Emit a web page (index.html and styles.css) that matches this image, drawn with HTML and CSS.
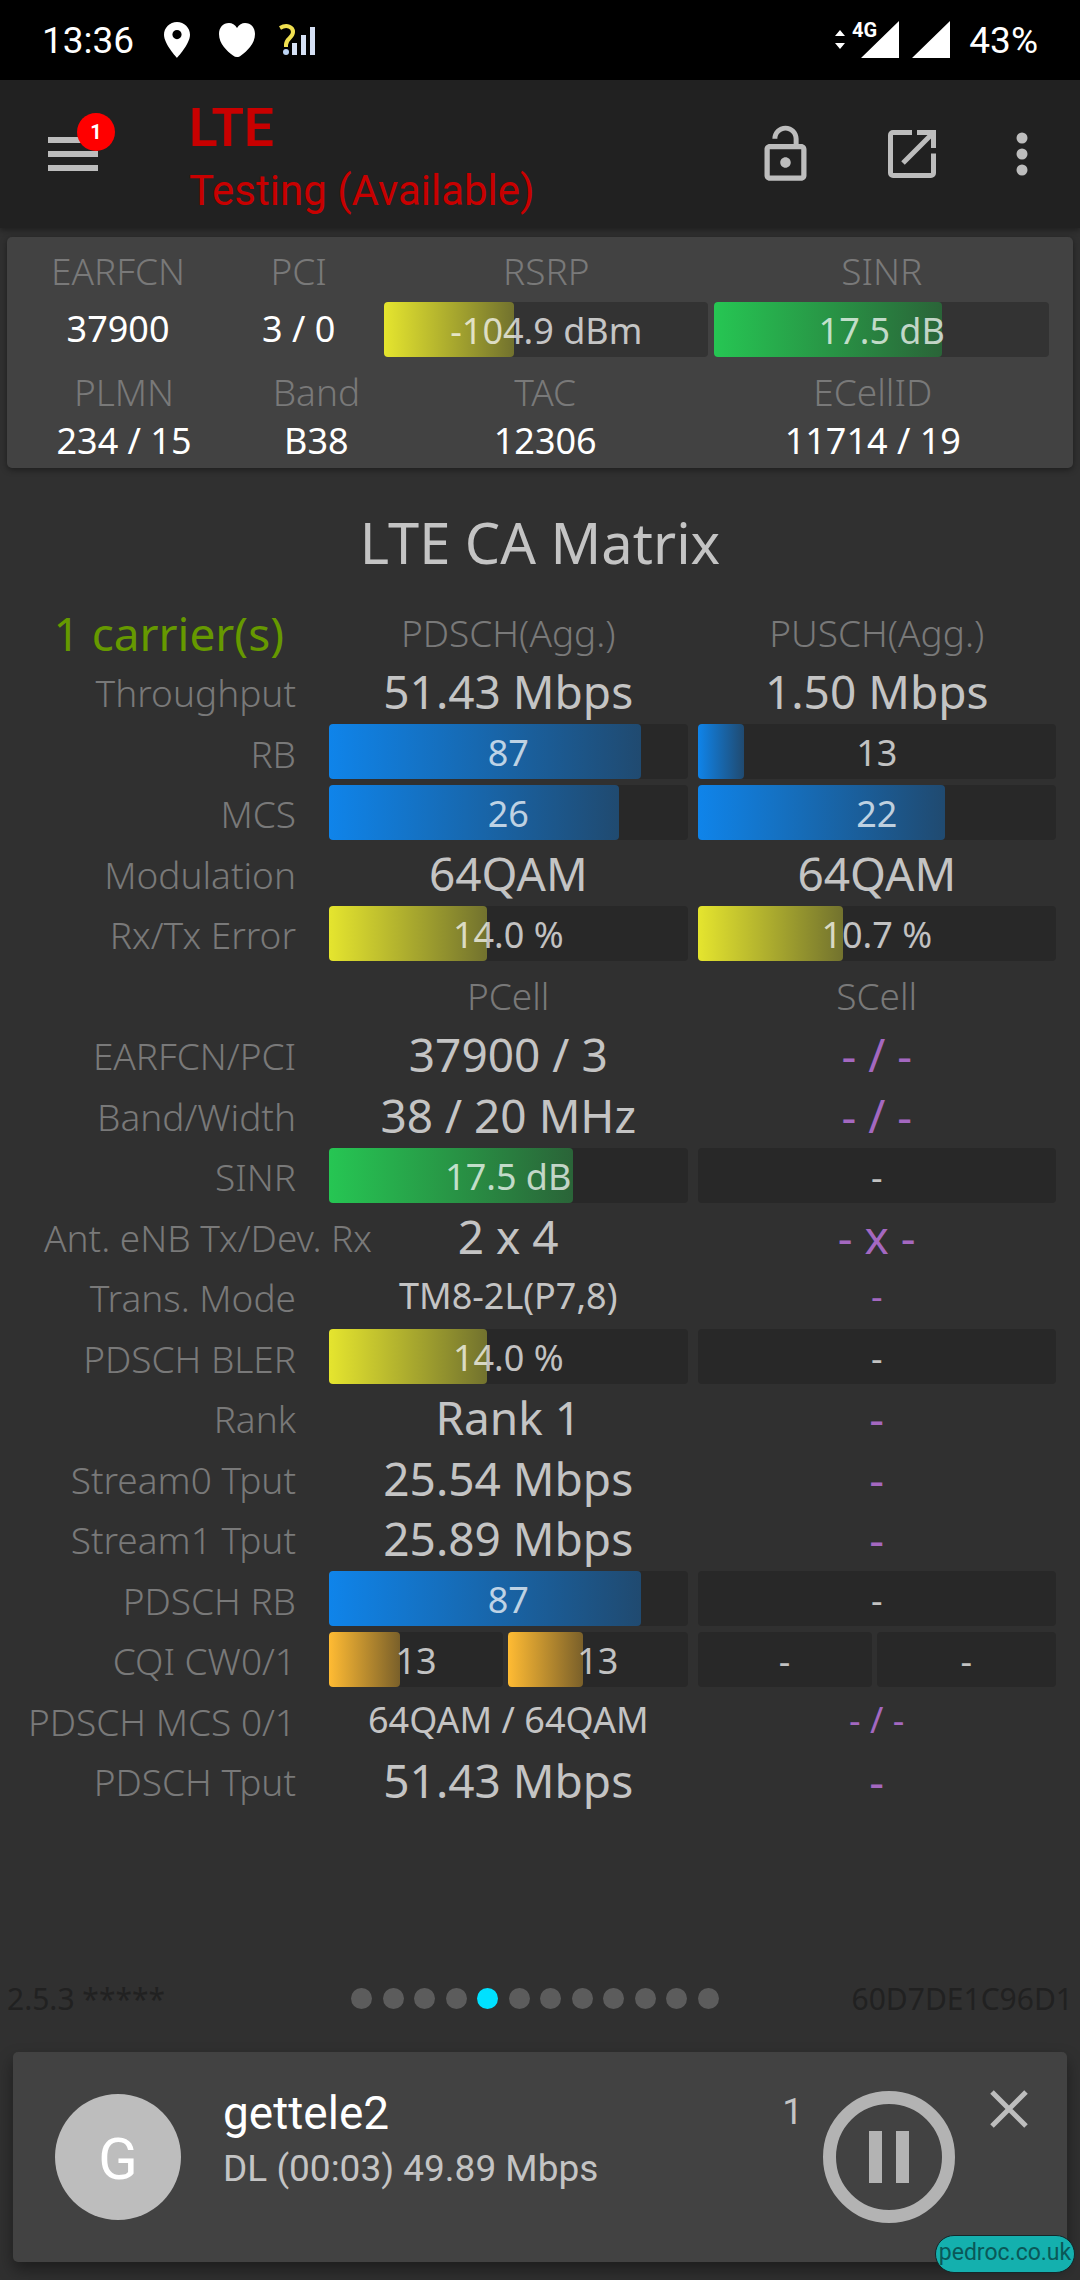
FILE: index.html
```html
<!DOCTYPE html>
<html lang="en">
<head>
    <meta charset="UTF-8">
    <meta name="viewport" content="width=device-width, initial-scale=1.0">
    <title>LTE CA Matrix</title>
    <link rel="stylesheet" href="styles.css">
</head>
<body>
    <div class="status-bar">
        <span class="clock">13:36</span>
        <svg class="pin" width="26" height="36" viewBox="0 0 26 36"><path fill="#fff" fill-rule="evenodd" d="M13 0C5.800 0 0 5.700 0 12.800 0 22 13 36 13 36s13-14 13-23.200C26 5.700 20.200 0 13 0zm0 8a4.600 4.600 0 1 1 0 9.200A4.600 4.600 0 0 1 13 8z"/></svg>
        <svg class="heart" width="36" height="34" viewBox="0 0 36 34"><path fill="#fff" d="M18 5C16 1.500 13 0 10 0 4 0 0 4.500 0 11c0 10 8 17 14 21.500 2.500 2 5.500 2 8 0C28 28 36 21 36 11 36 4.500 32 0 26 0c-3 0-6 1.500-8 5z"/></svg>
        <svg class="signal" width="36" height="32" viewBox="0 0 36 32">
            <path fill="none" stroke="#f0e050" stroke-width="4" d="M1 4c7-4 13-1 13 4 0 6-7 6-7 13v2"/>
            <circle cx="7" cy="28" r="3" fill="#bcd4f4"/>
            <path fill="#d5e0f4" d="M13 19h5v12h-5zM22 11h5v20h-5zM31 3h5v28h-5z"/>
        </svg>
        <span class="spacer"></span>
        <svg width="116" height="50" viewBox="0 -6 116 50">
            <path fill="#fff" d="M1 15l5-6 5 6zM1 22h10l-5 6zM65 0v37H27zM116 0v37H78z"/>
            <text class="network" x="18" y="16">4G</text>
        </svg>
        <span class="battery">43%</span>
    </div>

    <header class="toolbar">
        <button class="menu-button" aria-label="Menu">
            <svg width="50" height="35" viewBox="0 0 50 35"><path fill="#bdbdbd" d="M0 0h50v6H0zM0 14h50v6H0zM0 28h50v6H0z"/></svg>
            <span class="badge">1</span>
        </button>
        <div class="heading">
            <h1>LTE</h1>
            <p>Testing (Available)</p>
        </div>
        <button aria-label="Unlock">
            <svg width="63" height="63" viewBox="0 0 24 24"><path fill="#bdbdbd" d="M12 17c1.100 0 2-.9 2-2s-.9-2-2-2-2 .9-2 2 .9 2 2 2zm6-9h-1V6c0-2.760-2.240-5-5-5S7 3.240 7 6h1.900c0-1.710 1.390-3.100 3.100-3.100s3.100 1.390 3.100 3.100v2H6c-1.100 0-2 .9-2 2v10c0 1.100.9 2 2 2h12c1.100 0 2-.9 2-2V10c0-1.100-.9-2-2-2zm0 12H6V10h12v10z"/></svg>
        </button>
        <button class="open-button" aria-label="Open">
            <svg width="48" height="48" viewBox="0 0 48 48">
                <path fill="none" stroke="#bdbdbd" stroke-width="5" d="M24 2.500H5a2.500 2.500 0 0 0-2.500 2.500v38A2.500 2.500 0 0 0 5 45.500h38a2.500 2.500 0 0 0 2.500-2.500V23.500M29 2.500h16.500V18M15 33L45 3"/>
            </svg>
        </button>
        <button class="more-button" aria-label="More">
            <svg width="12" height="44" viewBox="0 0 12 44"><g fill="#bdbdbd"><circle cx="6" cy="6" r="5.500"/><circle cx="6" cy="22" r="5.500"/><circle cx="6" cy="38" r="5.500"/></g></svg>
        </button>
    </header>

    <section class="cell-card">
        <table class="cell-info radio">
            <tr><th>EARFCN</th><th>PCI</th><th>RSRP</th><th>SINR</th></tr>
            <tr>
                <td>37900</td>
                <td>3 / 0</td>
                <td><div class="bar"><i class="fill yellow" style="width: 40%"></i><span>-104.9 dBm</span></div></td>
                <td><div class="bar"><i class="fill green" style="width: 68%"></i><span>17.5 dB</span></div></td>
            </tr>
        </table>
        <table class="cell-info network-id">
            <tr><th>PLMN</th><th>Band</th><th>TAC</th><th>ECellID</th></tr>
            <tr><td>234 / 15</td><td>B38</td><td>12306</td><td>11714 / 19</td></tr>
        </table>
    </section>

    <main>
        <h2>LTE CA Matrix</h2>
        <table class="matrix">
            <tr><th class="carriers">1 carrier(s)</th><th>PDSCH(Agg.)</th><th>PUSCH(Agg.)</th></tr>
            <tr><th>Throughput</th><td>51.43 Mbps</td><td>1.50 Mbps</td></tr>
            <tr>
                <th>RB</th>
                <td><div class="bar"><i class="fill blue" style="width: 87%"></i><span>87</span></div></td>
                <td><div class="bar"><i class="fill blue" style="width: 13%"></i><span>13</span></div></td>
            </tr>
            <tr>
                <th>MCS</th>
                <td><div class="bar"><i class="fill blue" style="width: 81%"></i><span>26</span></div></td>
                <td><div class="bar"><i class="fill blue" style="width: 69%"></i><span>22</span></div></td>
            </tr>
            <tr><th>Modulation</th><td>64QAM</td><td>64QAM</td></tr>
            <tr>
                <th>Rx/Tx Error</th>
                <td><div class="bar"><i class="fill yellow" style="width: 44%"></i><span>14.0 %</span></div></td>
                <td><div class="bar"><i class="fill yellow" style="width: 40.5%"></i><span>10.7 %</span></div></td>
            </tr>
            <tr><th></th><th>PCell</th><th>SCell</th></tr>
            <tr><th>EARFCN/PCI</th><td>37900 / 3</td><td class="none">- / -</td></tr>
            <tr><th>Band/Width</th><td>38 / 20 MHz</td><td class="none">- / -</td></tr>
            <tr>
                <th>SINR</th>
                <td><div class="bar"><i class="fill green" style="width: 68%"></i><span>17.5 dB</span></div></td>
                <td><div class="bar"><span>-</span></div></td>
            </tr>
            <tr><th class="long">Ant. eNB Tx/Dev. Rx</th><td>2 x 4</td><td class="none">- x -</td></tr>
            <tr><th>Trans. Mode</th><td class="small">TM8-2L(P7,8)</td><td class="small none">-</td></tr>
            <tr>
                <th>PDSCH BLER</th>
                <td><div class="bar"><i class="fill yellow" style="width: 44%"></i><span>14.0 %</span></div></td>
                <td><div class="bar"><span>-</span></div></td>
            </tr>
            <tr><th>Rank</th><td>Rank 1</td><td class="none">-</td></tr>
            <tr><th>Stream0 Tput</th><td>25.54 Mbps</td><td class="none">-</td></tr>
            <tr><th>Stream1 Tput</th><td>25.89 Mbps</td><td class="none">-</td></tr>
            <tr>
                <th>PDSCH RB</th>
                <td><div class="bar"><i class="fill blue" style="width: 87%"></i><span>87</span></div></td>
                <td><div class="bar"><span>-</span></div></td>
            </tr>
            <tr>
                <th>CQI CW0/1</th>
                <td>
                    <div class="bar-pair">
                        <div class="bar"><i class="fill orange" style="width: 41%"></i><span>13</span></div>
                        <div class="bar"><i class="fill orange" style="width: 42%"></i><span>13</span></div>
                    </div>
                </td>
                <td>
                    <div class="bar-pair">
                        <div class="bar"><span>-</span></div>
                        <div class="bar"><span>-</span></div>
                    </div>
                </td>
            </tr>
            <tr><th>PDSCH MCS 0/1</th><td class="small">64QAM / 64QAM</td><td class="small none">- / -</td></tr>
            <tr><th>PDSCH Tput</th><td>51.43 Mbps</td><td class="none">-</td></tr>
        </table>
    </main>

    <div class="pager">
        <span>2.5.3 *****</span>
        <div class="dots">
            <i></i><i></i><i></i><i></i><i class="active"></i><i></i><i></i><i></i><i></i><i></i><i></i><i></i>
        </div>
        <span class="device">60D7DE1C96D1</span>
    </div>

    <footer class="test-card">
        <div class="avatar">G</div>
        <div class="test-info">
            <h3>gettele2</h3>
            <p>DL (00:03) 49.89 Mbps</p>
        </div>
        <span class="count">1</span>
        <button class="pause-button" aria-label="Pause">
            <svg width="132" height="132" viewBox="0 0 132 132">
                <circle cx="66" cy="66" r="59.500" fill="none" stroke="#b3b3b3" stroke-width="13"/>
                <path fill="#b3b3b3" d="M46 40h13v52H46zM73 40h13v52H73z"/>
            </svg>
        </button>
        <button class="close-button" aria-label="Close">
            <svg width="38" height="38" viewBox="0 0 38 38"><path stroke="#bdbdbd" stroke-width="5" d="M2 2l34 34M36 2L2 36"/></svg>
        </button>
        <a class="site" href="#">pedroc.co.uk</a>
    </footer>
</body>
</html>
```
FILE: styles.css
```css
* {
    box-sizing: border-box;
}
body {
    display: flex;
    flex-direction: column;
    min-height: 100vh;
    margin: 0;
    background: #303030;
    color: #c4c4c4;
    font-family: "Noto Sans", sans-serif;
    font-size: 36px;
}
h1, h2, h3, p {
    margin: 0;
    font-weight: normal;
}
button {
    display: flex;
    padding: 0;
    border: none;
    background: none;
    cursor: pointer;
}
svg {
    display: block;
}
table {
    width: 100%;
    border-collapse: collapse;
    table-layout: fixed;
}
th, td {
    padding: 0 5px;
    line-height: 40px;
    text-align: center;
    white-space: nowrap;
}
th {
    color: #797979;
    font-size: 37px;
    font-weight: 300;
}

/* status bar */
.status-bar {
    display: flex;
    align-items: center;
    height: 80px;
    padding: 0 42px;
    background: #000;
    color: #fff;
    font-family: Roboto, sans-serif;
    font-size: 37px;
}
.pin {
    margin-left: 30px;
}
.heart {
    margin-left: 29px;
}
.signal {
    margin-left: 24px;
}
.spacer {
    flex: 1;
}
.network {
    fill: #fff;
    font-size: 20px;
    font-weight: bold;
}
.battery {
    margin-left: 19px;
}

/* toolbar */
.toolbar {
    display: flex;
    align-items: center;
    height: 148px;
    padding: 0 52px 0 48px;
    background: #212121;
    box-shadow: 0 2px 6px rgba(0,0,0,0.4);
    font-family: Roboto, sans-serif;
}
.menu-button {
    position: relative;
}
.badge {
    position: absolute;
    top: -24px;
    left: 29px;
    width: 38px;
    height: 38px;
    border-radius: 50%;
    background: #f00;
    color: #fff;
    font-family: Roboto, sans-serif;
    font-size: 20px;
    font-weight: bold;
    line-height: 38px;
}
.heading {
    flex: 1;
    margin-left: 91px;
    padding-top: 8px;
    color: #c80000;
}
.heading h1 {
    font-size: 53px;
    font-weight: 600;
    line-height: 66px;
}
.heading p {
    font-size: 42px;
    line-height: 60px;
}
.open-button {
    margin-left: 71px;
}
.more-button {
    margin-left: 80px;
}

/* serving cell card */
.cell-card {
    margin: 9px 7px 0;
    padding: 10px 0 7px;
    border-radius: 5px;
    background: #424242;
    box-shadow: 0 2px 6px rgba(0,0,0,0.4);
}
.cell-info {
    color: #fff;
}
.radio {
    width: calc(100% - 34px);
    margin-left: 13px;
}
.radio th {
    height: 48px;
}
.radio td {
    height: 68px;
}
.radio th:nth-child(1) {
    width: 19%;
}
.radio th:nth-child(2) {
    width: 16%;
}
.radio th:nth-child(3) {
    width: 32%;
}
.radio th, .radio td {
    padding: 0 3px;
}
.radio .bar {
    background: #333;
}
.network-id {
    width: calc(100% - 26px);
    margin-left: 13px;
}
.network-id th {
    height: 58px;
}
.network-id td {
    height: 40px;
}
.network-id th:nth-child(1) {
    width: 20%;
}
.network-id th:nth-child(2) {
    width: 17%;
}
.network-id th:nth-child(3) {
    width: 27%;
}

/* bars */
.bar {
    position: relative;
    height: 55px;
    border-radius: 4px;
    background: #282828;
    color: rgba(255,255,255,0.72);
    font-size: 36px;
    line-height: 57px;
}
.bar span {
    position: relative;
}
.bar-pair {
    display: grid;
    grid-template-columns: 33fr 34fr;
    gap: 5px;
}
.fill {
    position: absolute;
    top: 0;
    left: 0;
    height: 100%;
    border-radius: 4px;
}
.blue {
    background: linear-gradient(to right, #0f84ea, #204a70);
}
.yellow {
    background: linear-gradient(to right, #e5e52e, #72722e);
}
.green {
    background: linear-gradient(to right, #26c653, #2a6438);
}
.orange {
    background: linear-gradient(to right, #ffbb33, #7a602a);
}

/* matrix */
main {
    flex: 1;
}
h2 {
    padding: 36px 0 20px;
    font-size: 56px;
    line-height: 76px;
    text-align: center;
}
.matrix {
    width: calc(100% - 19px);
}
.matrix tr {
    height: 60px;
}
.matrix tr:nth-child(odd) {
    height: 61px;
}
.matrix th {
    padding-top: 4px;
}
.matrix td {
    font-size: 46px;
}
.matrix th:first-child {
    width: 324px;
    padding: 4px 28px 0 0;
    text-align: right;
}
.matrix th.carriers {
    padding-right: 40px;
    color: #669900;
    font-size: 46px;
    font-weight: normal;
}
.matrix th.long {
    padding: 4px 0 0 44px;
    text-align: left;
}
.matrix .small {
    font-size: 36px;
}
.matrix .none {
    color: #a468c0;
}

/* page dots */
.pager {
    display: flex;
    align-items: center;
    height: 108px;
    padding: 0 7px;
    color: #212121;
    font-size: 30px;
}
.pager span {
    flex: 1;
}
.pager .device {
    text-align: right;
}
.dots {
    display: flex;
    justify-content: space-between;
    width: 368px;
    margin-right: 10px;
}
.dots i {
    width: 21px;
    height: 21px;
    border-radius: 50%;
    background: #5c5c5c;
}
.dots .active {
    background: #00e1ff;
}

/* running test */
.test-card {
    position: relative;
    display: flex;
    align-items: center;
    height: 210px;
    margin: 0 13px 18px;
    padding: 0 39px 0 42px;
    border-radius: 5px;
    background: #424242;
    box-shadow: 0 8px 16px rgba(0,0,0,0.4);
    font-family: Roboto, sans-serif;
}
.avatar {
    width: 126px;
    height: 126px;
    border-radius: 50%;
    background: #bdbdbd;
    color: #fff;
    font-size: 58px;
    line-height: 130px;
    text-align: center;
}
.test-info {
    flex: 1;
    align-self: flex-start;
    margin-left: 42px;
    padding-top: 31px;
}
.test-info h3 {
    color: #fff;
    font-size: 46px;
    line-height: 60px;
}
.test-info p {
    font-size: 37px;
    line-height: 52px;
}
.count {
    align-self: flex-start;
    padding-top: 38px;
    font-size: 37px;
}
.pause-button {
    margin-left: 20px;
}
.close-button {
    align-self: flex-start;
    margin: 38px 0 0 35px;
}
.site {
    position: absolute;
    right: -8px;
    bottom: -11px;
    width: 140px;
    height: 38px;
    border: 1px solid #14282a;
    border-radius: 19px;
    background: #14b0ae;
    color: #0a5858;
    font-size: 23px;
    line-height: 34px;
    text-align: center;
    text-decoration: none;
}
```
